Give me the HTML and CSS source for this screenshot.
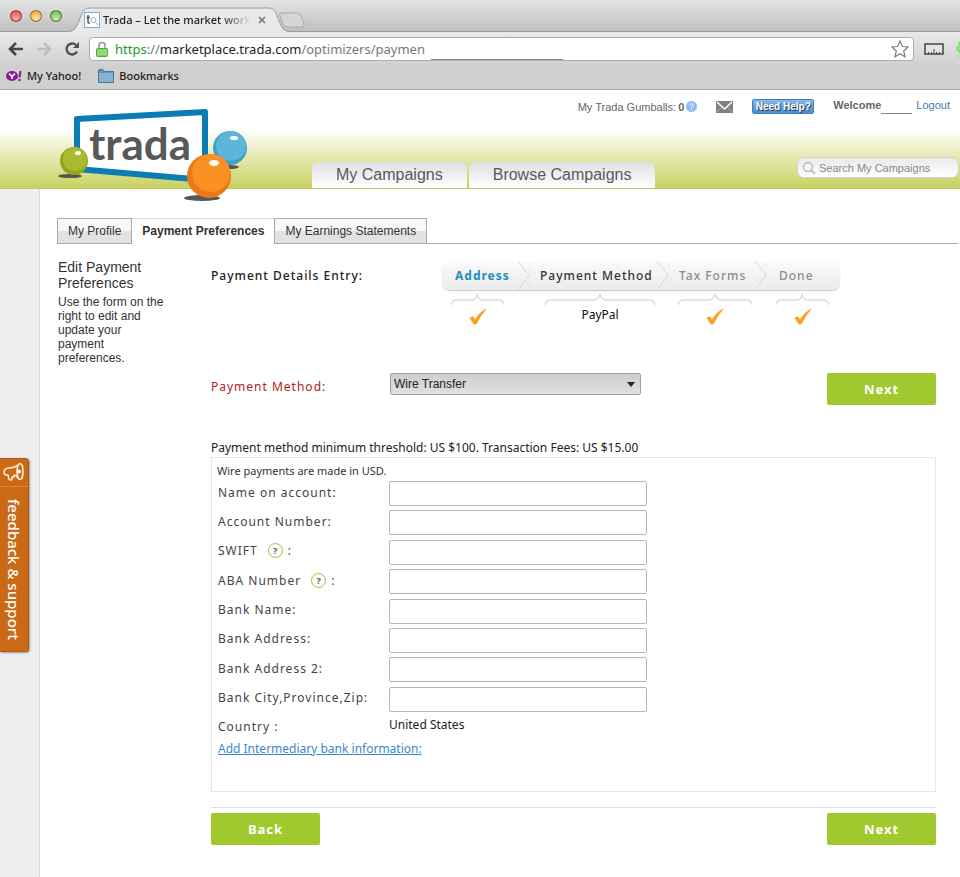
FILE: index.html
```html
<!DOCTYPE html>
<html lang="en">

<head>
    <meta charset="UTF-8">
    <meta name="viewport" content="width=device-width, initial-scale=1.0">
    <title>Trada – Let the market work</title>
    <link rel="stylesheet" href="styles.css">
</head>

<body>
    <!-- Browser window -->
    <div class="chrome">
        <div class="titlebar">
            <div class="lights">
                <span class="light red"></span>
                <span class="light yellow"></span>
                <span class="light green"></span>
            </div>
            <div class="tab">
                <svg class="tab_shape" width="224" height="25" viewBox="0 0 224 25" aria-hidden="true">
                    <path d="M0 25 C8 24 8 20 11 14 C14 6 15 1 22 1 H200 C207 1 208 6 211 14 C214 20 214 24 222 25 Z" fill="#e9e9e9" />
                    <path d="M0 24.500 C8 24 8 20 11 14 C14 6 15 1 22 1 H200 C207 1 208 6 211 14 C214 20 214 24 222 24.500" fill="none" stroke="#9b9b9b" />
                </svg>
                <svg class="favicon" width="16" height="16" viewBox="0 0 16 16" aria-hidden="true">
                    <rect x="0.500" y="0.500" width="15" height="15" fill="#fff" stroke="#6db3d8" />
                    <path d="M4 3 V10 Q4 11.500 6 11 M2.500 5.500 H6" fill="none" stroke="#555" stroke-width="1.500" />
                    <circle cx="9.500" cy="8" r="2.500" fill="none" stroke="#aaa" />
                    <path d="M11.500 10 L14 13" stroke="#aaa" />
                </svg>
                <span class="tab_title">Trada – Let the market work</span>
                <button class="tab_close" type="button" aria-label="Close tab">
                    <svg width="8" height="8" viewBox="0 0 8 8"><path d="M1 1 L7 7 M7 1 L1 7" stroke="#777" stroke-width="1.600" /></svg>
                </button>
            </div>
            <svg class="new_tab" width="28" height="16" viewBox="0 0 28 16" aria-hidden="true">
                <path d="M3 1 H19 Q22 1 23 4 L26 12 Q27 15 24 15 H9 Q6 15 5 12 L2 4 Q1 1 3 1 Z" fill="#d6d6d6" stroke="#aaa" />
            </svg>
        </div>

        <div class="toolbar">
            <button type="button" aria-label="Back">
                <svg width="16" height="14" viewBox="0 0 16 14"><path d="M8 1 L2 7 L8 13 M2 7 H15" fill="none" stroke="#484848" stroke-width="2.600" /></svg>
            </button>
            <button type="button" aria-label="Forward">
                <svg width="16" height="14" viewBox="0 0 16 14"><path d="M8 1 L14 7 L8 13 M14 7 H1" fill="none" stroke="#bdbdbd" stroke-width="2.600" /></svg>
            </button>
            <button type="button" aria-label="Reload">
                <svg width="16" height="16" viewBox="0 0 16 16"><path d="M13 10.500 A5.500 5.500 0 1 1 12 4" fill="none" stroke="#505050" stroke-width="2.400" /><path d="M15 1 V7 H9 Z" fill="#505050" /></svg>
            </button>
            <div class="address">
                <svg width="12" height="16" viewBox="0 0 12 16" aria-hidden="true">
                    <path d="M3 8 V4 Q3 1.500 6 1.500 Q9 1.500 9 4 V8" fill="none" stroke="#999" stroke-width="1.600" />
                    <rect x="0.500" y="7.500" width="11" height="8" rx="1" fill="#82d265" stroke="#5ba444" />
                    <path d="M1 10 H11 M1 12.500 H11" stroke="#a6e58d" />
                </svg>
                <span class="url"><span class="scheme">https</span><span class="dim">://</span>marketplace.trada.com<span class="dim">/optimizers/paymen</span></span>
                <span class="redacted"></span>
                <svg class="star" width="18" height="18" viewBox="0 0 18 18" aria-hidden="true">
                    <path d="M9 1 L11.300 6.500 L17 7 L12.700 11 L14 16.800 L9 13.700 L4 16.800 L5.300 11 L1 7 L6.700 6.500 Z" fill="#fff" stroke="#7d7d7d" stroke-width="1.200" />
                </svg>
            </div>
            <svg width="20" height="12" viewBox="0 0 20 12" aria-hidden="true">
                <rect x="1" y="1" width="18" height="10" fill="#e4e4e4" stroke="#444" stroke-width="1.500" />
                <path d="M4.500 11 V9 M7.500 11 V9 M10 11 V6 M12.500 11 V9 M15.500 11 V9" stroke="#444" />
            </svg>
            <svg class="extension" width="4" height="18" viewBox="0 0 4 18" aria-hidden="true">
                <path d="M4 1 L2 3 V6 L0 7 V10 L2 12 L4 14 Z" fill="#8fdd87" />
                <path d="M1 16 H4" stroke="#bbb" />
            </svg>
        </div>

        <div class="bookmarks">
            <a href="#" class="bookmark">
                <svg width="16" height="12" viewBox="0 0 16 12" aria-hidden="true">
                    <ellipse cx="6" cy="6" rx="6" ry="5" fill="#8a1a94" />
                    <path d="M3 3.500 L6 6.500 L9 3.500 M6 6 V9" fill="none" stroke="#fff" stroke-width="1.600" />
                    <path d="M14.500 1 L13.500 7.500" stroke="#8a1a94" stroke-width="2" />
                    <circle cx="13.500" cy="10" r="1.200" fill="#8a1a94" />
                </svg>
                My Yahoo!
            </a>
            <a href="#" class="bookmark">
                <svg width="16" height="14" viewBox="0 0 16 14" aria-hidden="true">
                    <path d="M0.500 2 Q0.500 0.500 2 0.500 H5 L7 2.500 H15.500 V13.500 H0.500 Z" fill="#5f93b8" stroke="#4a7898" />
                    <path d="M1 4 H15 V13 H1 Z" fill="#84b4d2" />
                </svg>
                Bookmarks
            </a>
        </div>
    </div>

    <!-- Site header -->
    <header class="header">
        <a href="#" class="logo" aria-label="trada">
            <svg width="194" height="98" viewBox="0 0 194 98">
                <ellipse cx="13" cy="69" rx="12" ry="2" fill="#55564a" />
                <ellipse cx="172" cy="60" rx="10" ry="2" fill="#55564a" />
                <path d="M20 12 L148 5 V73 L20 62 Z" fill="#fff" stroke="#0b7cb4" stroke-width="6" stroke-linejoin="round" />
                <text x="32" y="53" class="logo_text">trada</text>
                <circle cx="173" cy="41" r="17" fill="#439dc4" />
                <circle cx="174" cy="39" r="15" fill="#5cb6da" />
                <ellipse cx="177" cy="31" rx="4" ry="2" fill="#fff" />
                <circle cx="17" cy="54" r="14" fill="#93a51f" />
                <circle cx="18" cy="52" r="12" fill="#abb92f" />
                <ellipse cx="21" cy="46" rx="3" ry="2" fill="#fff" />
                <ellipse cx="145" cy="91" rx="18" ry="3" fill="#55565a" />
                <circle cx="152" cy="69" r="22" fill="#ea7a18" />
                <circle cx="154" cy="66" r="19" fill="#fa9122" />
                <ellipse cx="157" cy="56" rx="5" ry="3" fill="#fff" />
            </svg>
        </a>

        <div class="header_main">
            <div class="account">
                <span class="gumballs">My Trada Gumballs: <b>0</b>
                    <svg width="11" height="11" viewBox="0 0 11 11" aria-hidden="true">
                        <circle cx="5.500" cy="5.500" r="5.500" fill="#8dbdf0" />
                        <path d="M3.800 4.300 Q4 2.700 5.500 2.700 Q7.200 2.700 7.200 4.200 Q7.200 5 5.500 6 V6.800 M5.500 7.800 V9" fill="none" stroke="#fff" />
                    </svg>
                </span>
                <svg width="17" height="12" viewBox="0 0 17 12" aria-hidden="true">
                    <rect width="17" height="12" fill="#808080" />
                    <path d="M1 1 L8.500 8 L16 1" fill="none" stroke="#fff" stroke-width="1.500" />
                    <path d="M1 11 L6 6 M16 11 L11 6" stroke="#aaa" />
                </svg>
                <button class="help_btn" type="button">Need Help?</button>
                <span class="welcome"><b>Welcome</b><span class="user_blank"></span><a href="#">Logout</a></span>
            </div>
            <div class="header_bottom">
                <nav class="main_nav">
                    <a href="#">My Campaigns</a>
                    <a href="#">Browse Campaigns</a>
                </nav>
                <div class="search">
                    <svg width="14" height="14" viewBox="0 0 14 14" aria-hidden="true">
                        <circle cx="6" cy="6" r="4.500" fill="none" stroke="#bbb" stroke-width="1.400" />
                        <path d="M9 9 L13 13" stroke="#bbb" stroke-width="2" />
                    </svg>
                    <input type="text" placeholder="Search My Campaigns" aria-label="Search My Campaigns">
                </div>
            </div>
        </div>
    </header>

    <div class="page">
        <div class="rail">
            <button class="feedback" type="button">
                <svg width="22" height="20" viewBox="0 0 22 20" aria-hidden="true">
                    <path d="M15 3 Q11 6 5 6 Q1 7 1 10 Q1 13 4 13 L5 13 L6 17 Q6 18 8 18 L9 17 V15 L11 15 V13 Q13 13 15 16" fill="none" stroke="#ffe9d0" stroke-width="1.600" stroke-linejoin="round" />
                    <ellipse cx="17" cy="9.500" rx="3" ry="8" fill="none" stroke="#ffe9d0" stroke-width="1.600" />
                    <circle cx="16" cy="9.500" r="2" fill="#fff" />
                </svg>
                <span>feedback &amp; support</span>
            </button>
        </div>

        <main class="content">
            <nav class="sub_nav">
                <a href="#">My Profile</a>
                <a href="#" class="active">Payment Preferences</a>
                <a href="#">My Earnings Statements</a>
            </nav>

            <div class="columns">
                <aside class="intro">
                    <h1>Edit Payment Preferences</h1>
                    <p>Use the form on the right to edit and update your payment preferences.</p>
                </aside>

                <form class="payment">
                    <div class="progress">
                        <h2>Payment Details Entry:</h2>
                        <ol class="steps">
                            <li class="current">
                                <div class="step_label">Address
                                    <svg class="chevron" width="13" height="29" viewBox="0 0 13 29"><path d="M1 0 L12 14 L1 29" fill="none" stroke="#d9d9d9" /></svg>
                                </div>
                                <div class="step_state">
                                    <svg width="55" height="12" viewBox="0 0 55 12"><path d="M1 12 Q2 7 6 7 H22 Q26 7 27 1 Q28 7 32 7 H49 Q53 7 54 12" fill="none" stroke="#dcdcdc" stroke-width="1.500" /></svg>
                                    <svg class="check" width="18" height="16" viewBox="0 0 18 16"><path d="M1 9 L4 8 L6 11 Q10 4 17 0 Q11 7 7 15 L5 15 Z" fill="#fba021" stroke="#fba021" /></svg>
                                </div>
                            </li>
                            <li class="open">
                                <div class="step_label">Payment Method
                                    <svg class="chevron" width="13" height="29" viewBox="0 0 13 29"><path d="M1 0 L12 14 L1 29" fill="none" stroke="#d9d9d9" /></svg>
                                </div>
                                <div class="step_state">
                                    <svg width="112" height="12" viewBox="0 0 112 12"><path d="M1 12 Q2 7 6 7 H50 Q54 7 56 1 Q58 7 62 7 H106 Q110 7 111 12" fill="none" stroke="#dcdcdc" stroke-width="1.500" /></svg>
                                    <span>PayPal</span>
                                </div>
                            </li>
                            <li>
                                <div class="step_label">Tax Forms
                                    <svg class="chevron" width="13" height="29" viewBox="0 0 13 29"><path d="M1 0 L12 14 L1 29" fill="none" stroke="#d9d9d9" /></svg>
                                </div>
                                <div class="step_state">
                                    <svg width="76" height="12" viewBox="0 0 76 12"><path d="M1 12 Q2 7 6 7 H32 Q36 7 38 1 Q40 7 44 7 H70 Q74 7 75 12" fill="none" stroke="#dcdcdc" stroke-width="1.500" /></svg>
                                    <svg class="check" width="18" height="16" viewBox="0 0 18 16"><path d="M1 9 L4 8 L6 11 Q10 4 17 0 Q11 7 7 15 L5 15 Z" fill="#fba021" stroke="#fba021" /></svg>
                                </div>
                            </li>
                            <li>
                                <div class="step_label">Done</div>
                                <div class="step_state">
                                    <svg width="55" height="12" viewBox="0 0 55 12"><path d="M1 12 Q2 7 6 7 H22 Q26 7 27 1 Q28 7 32 7 H49 Q53 7 54 12" fill="none" stroke="#dcdcdc" stroke-width="1.500" /></svg>
                                    <svg class="check" width="18" height="16" viewBox="0 0 18 16"><path d="M1 9 L4 8 L6 11 Q10 4 17 0 Q11 7 7 15 L5 15 Z" fill="#fba021" stroke="#fba021" /></svg>
                                </div>
                            </li>
                        </ol>
                    </div>

                    <div class="method">
                        <label for="method">Payment Method:</label>
                        <div class="select_wrap">
                            <select id="method">
                                <option>Wire Transfer</option>
                                <option>PayPal</option>
                            </select>
                        </div>
                        <button class="btn" type="button">Next</button>
                    </div>

                    <p class="threshold">Payment method minimum threshold: US $100. Transaction Fees: US $15.00</p>

                    <div class="details">
                        <p class="note">Wire payments are made in USD.</p>
                        <div class="fields">
                            <label for="name">Name on account:</label>
                            <input type="text" id="name">
                            <label for="account">Account Number:</label>
                            <input type="text" id="account">
                            <label for="swift">SWIFT <span class="hint">?</span>:</label>
                            <input type="text" id="swift">
                            <label for="aba">ABA Number <span class="hint">?</span>:</label>
                            <input type="text" id="aba">
                            <label for="bank">Bank Name:</label>
                            <input type="text" id="bank">
                            <label for="address">Bank Address:</label>
                            <input type="text" id="address">
                            <label for="address2">Bank Address 2:</label>
                            <input type="text" id="address2">
                            <label for="city">Bank City,Province,Zip:</label>
                            <input type="text" id="city">
                        </div>
                        <div class="country">
                            <span class="country_label">Country :</span>
                            <span>United States</span>
                        </div>
                        <a href="#" class="add_bank">Add Intermediary bank information:</a>
                    </div>

                    <div class="actions">
                        <button class="btn" type="button">Back</button>
                        <button class="btn" type="button">Next</button>
                    </div>
                </form>
            </div>
        </main>
    </div>
</body>

</html>
```
FILE: styles.css
```css
* {
    box-sizing: border-box;
    margin: 0;
    padding: 0;
}

body {
    min-height: 100vh;
    display: flex;
    flex-direction: column;
    background-color: #fff;
    font-family: "Liberation Sans", Arial, sans-serif;
    font-size: 12px;
    color: #333;
    overflow-x: hidden;
}

svg {
    display: block;
    flex-shrink: 0;
}

button {
    font-family: inherit;
    border: 0;
    background: none;
    cursor: pointer;
}

/* Browser window */
.chrome {
    font-family: "Noto Sans", sans-serif;
    color: #222;
    border-bottom: 1px solid #a8a8a8;
}

.titlebar {
    height: 32px;
    display: flex;
    align-items: flex-end;
    padding-left: 10px;
    background: linear-gradient(#e4e4e4, #bebebe);
    box-shadow: inset 0 -1px #9b9b9b;
}

.lights {
    display: flex;
    gap: 8px;
    align-self: center;
    width: 58px;
}

.light {
    width: 12px;
    height: 12px;
    border-radius: 50%;
    border: 1px solid rgba(0, 0, 0, 0.4);
}

.red {
    background: radial-gradient(circle at 50% 75%, #ffa9a0, #e2403c);
}

.yellow {
    background: radial-gradient(circle at 50% 75%, #ffe79b, #e99a35);
}

.green {
    background: radial-gradient(circle at 50% 75%, #cdf0a5, #5faa46);
}

.tab {
    position: relative;
    width: 218px;
    height: 25px;
    display: flex;
    align-items: center;
    gap: 3px;
    padding: 0 16px;
}

.tab_shape {
    position: absolute;
    left: 0;
    top: 0;
}

.favicon,
.tab_title,
.tab_close {
    position: relative;
}

.tab_title {
    flex: 1;
    font-size: 11px;
    font-weight: 500;
    white-space: nowrap;
    overflow: hidden;
    -webkit-mask-image: linear-gradient(to right, #000 80%, transparent);
    mask-image: linear-gradient(to right, #000 80%, transparent);
}

.tab_close {
    padding: 4px;
}

.new_tab {
    align-self: center;
    margin: 8px 0 0 -8px;
}

.toolbar {
    height: 34px;
    display: flex;
    align-items: center;
    gap: 12px;
    padding-left: 8px;
    background: linear-gradient(#e9e9e9, #d0d0d0);
}

.address {
    flex: 1;
    height: 24px;
    display: flex;
    align-items: center;
    padding: 0 4px;
    margin: 0 -2px 0 -3px;
    background-color: #fff;
    border: 1px solid #adadad;
    border-radius: 4px;
}

.address svg:first-child {
    margin-left: 2px;
}

.url {
    width: 316px;
    margin-left: 7px;
    font-size: 13px;
    white-space: nowrap;
    overflow: hidden;
}

.scheme {
    color: #1c9a2a;
}

.dim {
    color: #777;
}

.redacted {
    align-self: flex-end;
    width: 132px;
    height: 1px;
    background-color: #888;
}

.star {
    margin-left: auto;
}

.bookmarks {
    height: 23px;
    display: flex;
    align-items: flex-start;
    gap: 17px;
    padding: 1px 6px;
    background-color: #cfcfcf;
}

.bookmark {
    display: flex;
    align-items: center;
    gap: 5px;
    font-size: 11px;
    font-weight: 500;
    line-height: 18px;
    color: #222;
    text-decoration: none;
}

/* Site header */
.header {
    height: 99px;
    display: flex;
    background: linear-gradient(#fff 40%, #e6eab4 67%, #c9d160);
    border-bottom: 1px solid #bcc65a;
}

.logo {
    width: 312px;
    padding: 17px 0 0 57px;
}

.logo_text {
    font-family: Lato, sans-serif;
    font-size: 44px;
    font-weight: bold;
    fill: #58595b;
}

.header_main {
    flex: 1;
    display: flex;
    flex-direction: column;
    justify-content: space-between;
}

.account {
    display: flex;
    justify-content: flex-end;
    align-items: center;
    gap: 19px;
    padding: 9px 10px 0 0;
    font-size: 11px;
    color: #666;
}

.gumballs {
    display: flex;
    align-items: center;
    gap: 2px;
}

.help_btn {
    width: 62px;
    height: 15px;
    font-size: 10px;
    line-height: 13px;
    font-weight: bold;
    white-space: nowrap;
    color: #fff;
    text-shadow: 1px 1px 1px #234;
    background: linear-gradient(#85b9ea, #4b8fd0);
    border: 1px solid #3f7fbd;
    border-radius: 2px;
}

.welcome {
    display: flex;
}

.user_blank {
    width: 31px;
    height: 15px;
    margin-right: 4px;
    border-bottom: 1px solid #888;
}

.welcome a {
    color: #3c7cb8;
    text-decoration: none;
}

.header_bottom {
    display: flex;
    justify-content: space-between;
    align-items: flex-end;
}

.main_nav {
    display: flex;
    gap: 2px;
}

.main_nav a {
    padding: 0 24px;
    font-size: 16px;
    line-height: 26px;
    color: #58595b;
    text-decoration: none;
    background: linear-gradient(#dfdfe2, #fff);
    border-radius: 7px 7px 0 0;
}

.search {
    width: 162px;
    height: 21px;
    display: flex;
    align-items: center;
    gap: 3px;
    padding: 0 4px;
    margin: 0 1px 10px 0;
    background: linear-gradient(#e9e9e9, #fff);
    border: 1px solid #d3d3c4;
    border-radius: 7px;
}

.search input {
    width: 100%;
    font-family: inherit;
    font-size: 11px;
    border: 0;
    outline: 0;
    background: none;
}

.search input::placeholder {
    color: #888;
}

/* Page body */
.page {
    flex: 1;
    display: flex;
}

.rail {
    position: relative;
    width: 40px;
    flex-shrink: 0;
    background-color: #eee;
    border-right: 1px solid #ddd;
}

.feedback {
    position: absolute;
    left: 0;
    top: 269px;
    width: 29px;
    height: 194px;
    display: flex;
    flex-direction: column;
    align-items: center;
    background-color: #cb6a16;
    border: 1px solid #b35b10;
    border-left: 0;
    border-radius: 0 4px 4px 0;
    box-shadow: 1px 1px 2px #999;
}

.feedback svg {
    margin: 3px 0 4px;
}

.feedback span {
    flex: 1;
    width: 100%;
    display: flex;
    align-items: center;
    justify-content: center;
    writing-mode: vertical-rl;
    font-family: "Noto Sans", sans-serif;
    font-size: 15px;
    font-weight: 500;
    color: #fff;
    border-top: 1px solid #e08a3e;
}

.content {
    flex: 1;
    padding: 29px 2px 0 17px;
}

.sub_nav {
    display: flex;
    border-bottom: 1px solid #aaa;
}

.sub_nav a {
    padding: 0 10px;
    line-height: 24px;
    color: #333;
    text-decoration: none;
    background: linear-gradient(#f7f7f7 50%, #e2e2e2 50%);
    border: 1px solid #aaa;
    border-bottom: 0;
}

.sub_nav .active {
    margin-bottom: -1px;
    font-weight: bold;
    background: #fff;
    border-width: 1px 0 0;
    border-color: #ddd;
}

.columns {
    display: flex;
    padding: 15px 22px 0 1px;
}

.intro {
    width: 108px;
    margin-right: 45px;
    flex-shrink: 0;
}

.intro h1 {
    font-size: 14px;
    font-weight: normal;
    line-height: 16px;
    margin-bottom: 4px;
}

.intro p {
    line-height: 14px;
}

.payment {
    flex: 1;
    font-family: "Noto Sans", sans-serif;
    font-size: 12px;
}

.progress {
    display: flex;
    padding-top: 2px;
}

.progress h2 {
    width: 231px;
    font-size: 12px;
    font-weight: 500;
    line-height: 29px;
    letter-spacing: 1px;
    color: #222;
}

.steps {
    display: grid;
    grid-template-columns: 88px 139px 98px 73px;
    list-style: none;
}

.step_label {
    height: 29px;
    display: flex;
    align-items: center;
    justify-content: space-between;
    padding-left: 10px;
    line-height: 29px;
    font-weight: 500;
    letter-spacing: 1px;
    white-space: nowrap;
    color: #8c8c8c;
    background: linear-gradient(#fafafa, #ececec);
    box-shadow: 0 1px 1px #ccc;
}

.current .step_label {
    padding-left: 13px;
    font-weight: bold;
    color: #1c8fc4;
    border-radius: 8px 0 0 8px;
}

.open .step_label {
    color: #333;
}

.steps li:last-child .step_label {
    padding-left: 12px;
    border-radius: 0 8px 8px 0;
}

.chevron {
    margin-left: -6px;
}

.step_state {
    display: inline-flex;
    flex-direction: column;
    align-items: center;
    margin: 3px 0 0 8px;
    line-height: 20px;
    color: #111;
}

.open .step_state {
    margin-left: 14px;
}

.check {
    margin-top: 4px;
}

.method {
    display: flex;
    align-items: flex-start;
    margin-top: 48px;
}

.method label {
    width: 179px;
    line-height: 28px;
    letter-spacing: 1px;
    color: #b01c1c;
}

.select_wrap {
    position: relative;
    flex: 1;
}

.select_wrap::after {
    content: "";
    position: absolute;
    left: 237px;
    top: 9px;
    border: 4px solid transparent;
    border-top: 5px solid #222;
    border-bottom: 0;
    pointer-events: none;
}

select {
    width: 251px;
    height: 22px;
    padding-left: 3px;
    font-family: "Liberation Sans", Arial, sans-serif;
    font-size: 12px;
    color: #222;
    appearance: none;
    background: linear-gradient(#cdcdcd, #e0e0e0);
    border: 1px solid #a0a0a0;
    border-radius: 2px;
}

.btn {
    width: 109px;
    height: 32px;
    font-family: "Noto Sans", sans-serif;
    font-size: 13px;
    font-weight: bold;
    letter-spacing: 1px;
    color: #fff;
    background-color: #a0c82f;
    border-radius: 2px;
}

.threshold {
    margin-top: 34px;
    line-height: 18px;
    color: #222;
}

.details {
    min-height: 335px;
    padding: 5px 6px;
    border: 1px solid #e6e6e6;
}

.note {
    margin-left: -1px;
    font-size: 11px;
    line-height: 16px;
}

.fields {
    min-height: 237px;
    display: grid;
    grid-template-columns: 171px 258px;
    padding-top: 2px;
    letter-spacing: 1px;
}

.fields label {
    display: flex;
    align-items: center;
    height: 22px;
    color: #444;
}

.fields input {
    width: 100%;
    height: 25px;
    padding: 0 5px;
    font-family: inherit;
    font-size: 12px;
    border: 1px solid #b5b5b5;
    border-radius: 2px;
}

.hint {
    width: 15px;
    height: 15px;
    margin: 0 5px 0 10px;
    font-size: 9px;
    font-weight: bold;
    line-height: 13px;
    letter-spacing: 0;
    text-align: center;
    color: #555;
    border: 1px solid #9dc43a;
    border-radius: 50%;
}

.country {
    display: grid;
    grid-template-columns: 171px 1fr;
    line-height: 18px;
    color: #222;
}

.country_label {
    padding-top: 2px;
    letter-spacing: 1px;
    color: #444;
}

.add_bank {
    display: inline-block;
    margin-top: 4px;
    line-height: 18px;
    color: #3b87cf;
}

.actions {
    display: flex;
    justify-content: space-between;
    margin-top: 15px;
    padding-top: 5px;
    border-top: 1px solid #ddd;
}
```
